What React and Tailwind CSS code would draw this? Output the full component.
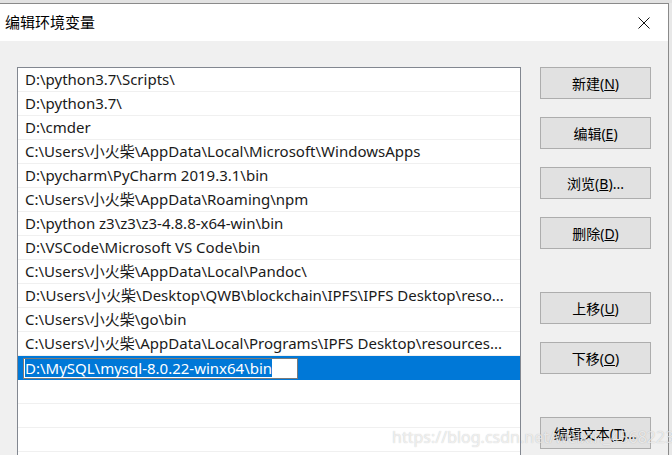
const paths = [
  'D:\\python3.7\\Scripts\\',
  'D:\\python3.7\\',
  'D:\\cmder',
  'C:\\Users\\小火柴\\AppData\\Local\\Microsoft\\WindowsApps',
  'D:\\pycharm\\PyCharm 2019.3.1\\bin',
  'C:\\Users\\小火柴\\AppData\\Roaming\\npm',
  'D:\\python z3\\z3\\z3-4.8.8-x64-win\\bin',
  'D:\\VSCode\\Microsoft VS Code\\bin',
  'C:\\Users\\小火柴\\AppData\\Local\\Pandoc\\',
  'D:\\Users\\小火柴\\Desktop\\QWB\\blockchain\\IPFS\\IPFS Desktop\\reso...',
  'C:\\Users\\小火柴\\go\\bin',
  'C:\\Users\\小火柴\\AppData\\Local\\Programs\\IPFS Desktop\\resources...',
];

const font = { fontFamily: '"Noto Sans", "Noto Sans CJK SC", sans-serif' };

const Btn = ({ label, keyChar, suffix = '', className = '' }) => (
  <button
    className={`w-[111px] h-[32px] bg-[#e1e1e1] border border-[#adadad] text-[14px] text-black flex items-center justify-center ${className}`}
  >
    {label}(<span className="underline">{keyChar}</span>){suffix}
  </button>
);

export default function App() {
  return (
    <div
      className="relative w-[672px] h-[455px] overflow-hidden bg-[#e8e8e8]"
      style={font}
    >
      <div className="h-[3px] bg-[#e2e2e2]" />
      <div className="w-[669px] h-[452px] border-r border-t border-[#8a8a8a] flex flex-col">
        {/* title bar */}
        <div className="h-[37px] bg-white flex items-center justify-between pl-[5px] pr-[16px]">
          <span className="text-[15px] text-black">编辑环境变量</span>
          <svg width="12" height="12" viewBox="0 0 12 12" className="mr-[2px]">
            <path d="M0.5 0.5 L11.5 11.5 M11.5 0.5 L0.5 11.5" stroke="#111" strokeWidth="1" fill="none" />
          </svg>
        </div>

        {/* body */}
        <div className="flex-1 bg-[#f0f0f0] flex pl-[17px] pt-[26px] overflow-hidden">
          <div className="w-[504px] h-[420px] shrink-0 bg-white border border-[#828790] overflow-hidden">
            {paths.map((p) => (
              <div
                key={p}
                className="h-[24px] border-b border-[#f0f0f0] flex items-center pl-[7px] text-[15px] text-[#1a1a1a] whitespace-nowrap"
              >
                {p}
              </div>
            ))}
            <div className="h-[24px] bg-[#0078d7] flex items-center pl-[5px]">
              <div className="h-[21px] w-[275px] bg-white border border-[#7a7a7a] flex items-center pl-[1px]">
                <span className="bg-[#0078d7] text-white text-[15px] leading-[18px] whitespace-nowrap">
                  D:\MySQL\mysql-8.0.22-winx64\bin
                </span>
              </div>
            </div>
            {[0, 1, 2, 3].map((i) => (
              <div key={i} className="h-[24px] border-b border-[#f0f0f0]" />
            ))}
          </div>

          <div className="ml-[19px] flex flex-col">
            <Btn label="新建" keyChar="N" />
            <Btn label="编辑" keyChar="E" className="mt-[18px]" />
            <Btn label="浏览" keyChar="B" suffix="..." className="mt-[18px]" />
            <Btn label="删除" keyChar="D" className="mt-[18px]" />
            <Btn label="上移" keyChar="U" className="mt-[43px]" />
            <Btn label="下移" keyChar="O" className="mt-[18px]" />
            <Btn label="编辑文本" keyChar="T" suffix="..." className="mt-[43px]" />
          </div>
        </div>
      </div>

      {/* watermark */}
      <div className="absolute left-[392px] top-[425px] text-[16px] text-white/70 whitespace-nowrap pointer-events-none [text-shadow:0_0_1px_rgba(0,0,0,0.25)]">
        https://blog.csdn.net/weixin_45682232
      </div>
    </div>
  );
}
